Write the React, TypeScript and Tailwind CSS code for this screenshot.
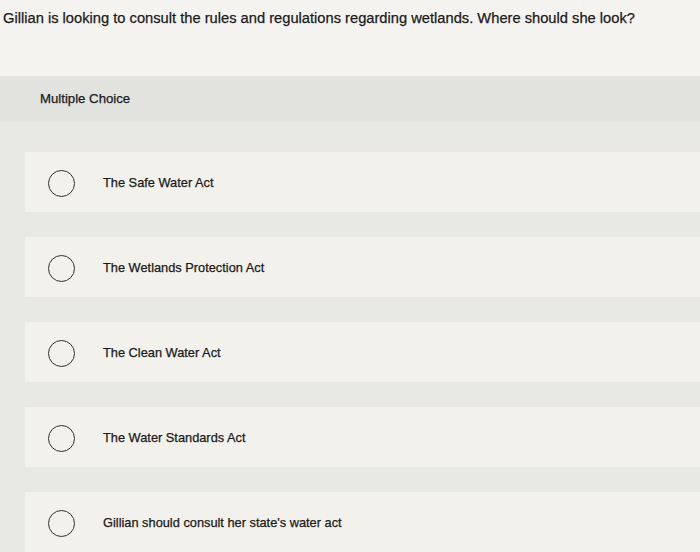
import React from "react";

const options = [
  "The Safe Water Act",
  "The Wetlands Protection Act",
  "The Clean Water Act",
  "The Water Standards Act",
  "Gillian should consult her state's water act",
];

export default function App() {
  return (
    <div className="w-[700px] h-[552px] overflow-hidden bg-[#e9e9e4] font-['Liberation_Sans',Arial,sans-serif] text-[#1a1a1a] [-webkit-text-stroke:0.25px_#1a1a1a]">
      <div className="h-[76px] bg-[#f4f3ef] pl-[3px] pt-[9px]">
        <p className="text-[14.7px] leading-[18px]">
          Gillian is looking to consult the rules and regulations regarding wetlands. Where should she look?
        </p>
      </div>

      <div className="h-[46px] bg-[#e2e2de] pl-[40px] flex items-center">
        <span className="text-[13.2px]">Multiple Choice</span>
      </div>

      <div className="flex flex-col gap-[25px] pt-[30px] pl-[25px]">
        {options.map((opt) => (
          <label key={opt} className="h-[60px] bg-[#f2f1ec] flex items-center pt-[2px]">
            <span className="ml-[23px] w-[27px] h-[27px] rounded-full border-[1.6px] border-[#2f2f2f] shrink-0" />
            <span className="ml-[28px] text-[12.8px]">{opt}</span>
          </label>
        ))}
      </div>
    </div>
  );
}
